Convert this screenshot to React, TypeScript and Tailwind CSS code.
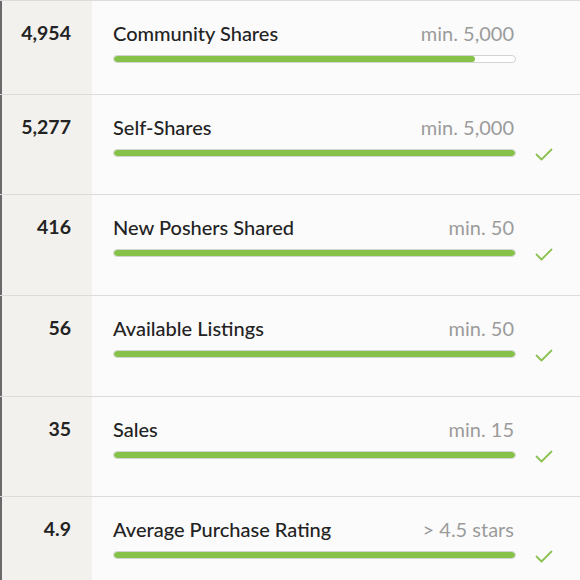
import React from 'react';

type Row = {
  value: string;
  label: string;
  min: string;
  pct: number;
  done: boolean;
  h: string;
};

const ROWS: Row[] = [
  { value: '4,954', label: 'Community Shares', min: 'min. 5,000', pct: 90, done: false, h: 'h-[94px]' },
  { value: '5,277', label: 'Self-Shares', min: 'min. 5,000', pct: 100, done: true, h: 'h-[100px]' },
  { value: '416', label: 'New Poshers Shared', min: 'min. 50', pct: 100, done: true, h: 'h-[101px]' },
  { value: '56', label: 'Available Listings', min: 'min. 50', pct: 100, done: true, h: 'h-[101px]' },
  { value: '35', label: 'Sales', min: 'min. 15', pct: 100, done: true, h: 'h-[100px]' },
  { value: '4.9', label: 'Average Purchase Rating', min: '> 4.5 stars', pct: 100, done: true, h: 'h-[100px]' },
];

function Check() {
  return (
    <svg width="18" height="13" viewBox="0 0 18 13" fill="none">
      <path d="M1.5 6.5 L6.5 11.5 L16.5 1.5" stroke="#8cc152" strokeWidth="1.8" strokeLinecap="round" strokeLinejoin="round" />
    </svg>
  );
}

function StatRow({ row }: { row: Row }) {
  return (
    <div className={`flex border-t border-[#dcdbda] ${row.h}`}>
      <div className="w-[92px] shrink-0 border-l-2 border-l-[#6a6a6a] bg-[#f3f1ee] pr-[21px] pt-[20px] text-right text-[19.5px] leading-[24px] font-bold text-[#232323]">
        {row.value}
      </div>
      <div className="flex flex-1 bg-[#fcfbfb] pl-[21px] pt-[20px]">
        <div className="w-[403px]">
          <div className="flex justify-between text-[20px] leading-[24px]">
            <span className="font-medium text-[#232323]">{row.label}</span>
            <span className="text-[#9b9b9b] pr-[2px]">{row.min}</span>
          </div>
          <div className="mt-[10px] h-[8px] rounded-full border border-[#d4d4d4] bg-white overflow-hidden">
            <div className="h-full rounded-full bg-[#86c24a]" style={{ width: `${row.pct}%` }} />
          </div>
        </div>
        {row.done && (
          <div className="pl-[19px] pt-[33px]">
            <Check />
          </div>
        )}
      </div>
    </div>
  );
}

export default function App() {
  return (
    <div className="w-[580px] h-[580px] overflow-hidden bg-[#fcfbfb]" style={{ fontFamily: 'Lato, "Open Sans", sans-serif' }}>
      {ROWS.map(r => (
        <StatRow key={r.label} row={r} />
      ))}
    </div>
  );
}
